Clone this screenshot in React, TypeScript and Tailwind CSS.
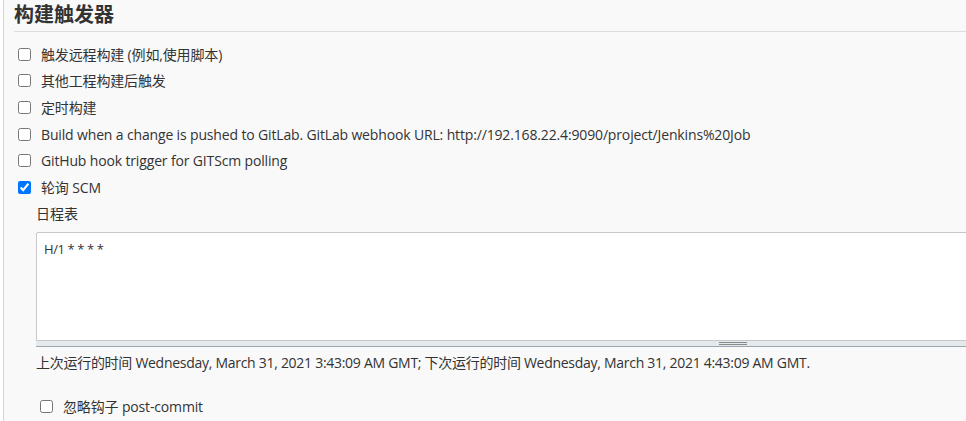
import { FC } from "react";

const font = { fontFamily: '"Open Sans", "Noto Sans CJK SC", sans-serif' };

const triggers: { label: string; checked?: boolean }[] = [
	{ label: "触发远程构建 (例如,使用脚本)" },
	{ label: "其他工程构建后触发" },
	{ label: "定时构建" },
	{ label: "Build when a change is pushed to GitLab. GitLab webhook URL: http://192.168.22.4:9090/project/Jenkins%20Job" },
	{ label: "GitHub hook trigger for GITScm polling" },
	{ label: "轮询 SCM", checked: true },
];

const CheckRow: FC<{ label: string; checked?: boolean }> = ({ label, checked = false }) => {
	return <label className="flex flex-row items-center h-[26.6px] gap-[10px]">
		<input type="checkbox" defaultChecked={checked} className="w-[13px] h-[13px] m-0" />
		<span className="text-[14px] text-[#333] whitespace-nowrap tracking-[-0.15px]">{label}</span>
	</label>
}

export default function App() {
	return <div style={font} className="w-[966px] h-[421px] overflow-hidden bg-white pl-[3px]">
		<div className="h-full border-l border-[#d4d4d4] bg-[#f9f9f9] pl-[10px]">
			<div className="h-[32px] border-b border-[#dcdcdc] flex items-end pb-[3px]">
				<h2 className="text-[20px] font-bold text-[#333] leading-[26px]">构建触发器</h2>
			</div>

			<div className="pl-[4px] pt-[9px] flex flex-col">
				{triggers.map((t, i) => <CheckRow key={i} label={t.label} checked={t.checked} />)}
			</div>

			<div className="flex flex-row pl-[5px]">
				<div className="w-[2px] h-[240px] bg-[repeating-linear-gradient(to_bottom,#aaaaaa_0px,#aaaaaa_5px,transparent_5px,transparent_8px)]" />
				<div className="flex flex-col pl-[17px]">
					<div className="h-[26px] flex items-center text-[14px] text-[#333]">日程表</div>
					<div className="mt-[5px] w-[1000px]">
						<div className="h-[109px] bg-white border border-[#c8c8c8] rounded-tl-[2px] px-[7px] py-[7px] text-[13px] text-[#333] leading-[18px] tracking-[-0.4px]">H/1 * * * *</div>
						<div className="h-[6px] bg-[#e4e9ec] border-b border-[#9aa6b2] flex flex-col items-start justify-center gap-[1px] pl-[683px]">
							<div className="w-[28px] h-[1px] bg-[#8a8a8a]" />
							<div className="w-[28px] h-[1px] bg-[#8a8a8a]" />
						</div>
					</div>
					<div className="h-[28px] flex items-center text-[14px] text-[#333] whitespace-nowrap tracking-[-0.28px] mt-[2px]">
						上次运行的时间 Wednesday, March 31, 2021 3:43:09 AM GMT; 下次运行的时间 Wednesday, March 31, 2021 4:43:09 AM GMT.
					</div>
					<div className="pt-[17px] pl-[4px]">
						<CheckRow label="忽略钩子 post-commit" />
					</div>
				</div>
			</div>
		</div>
	</div>
}
